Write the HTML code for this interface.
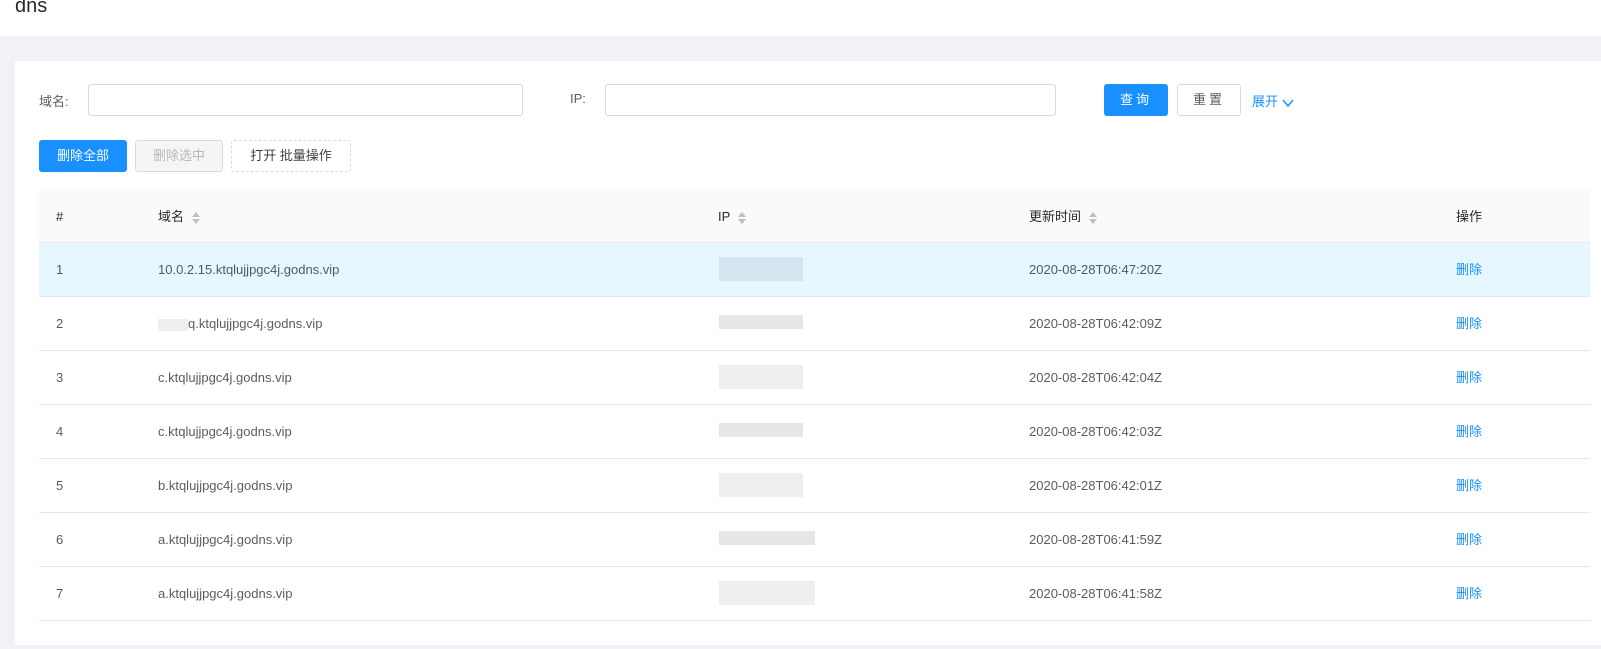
<!DOCTYPE html>
<html><head><meta charset="utf-8"><style>
*{box-sizing:border-box;margin:0;padding:0}
body{width:1601px;height:649px;overflow:hidden;background:#f0f2f5;font-family:"Liberation Sans","Noto Sans CJK SC",sans-serif;font-size:13px;color:rgba(0,0,0,.65);position:relative}
.abs{position:absolute}
.hdr{left:0;top:0;width:1601px;height:36px;background:#fff}
.title{left:15px;top:-5px;font-size:20px;color:rgba(0,0,0,.85)}
.card{left:15px;top:61px;width:1586px;height:584px;background:#fff}
.inp{border:1px solid #d9d9d9;border-radius:3px;height:32px;background:#fff}
.btn{height:32px;border:1px solid #d9d9d9;border-radius:3px;text-align:center;line-height:30px;font-size:13px;background:#fff;color:rgba(0,0,0,.65)}
.pri{background:#1890ff;border-color:#1890ff;color:#fff}
.dis{background:#f5f5f5;color:rgba(0,0,0,.25)}
.dash{border-style:dashed}
.th{left:39px;top:190px;width:1551px;height:53px;background:#fafafa;border-bottom:1px solid #e8e8e8}
.row{left:39px;width:1551px;height:54px;border-bottom:1px solid #e8e8e8}
.cell{position:absolute;top:0;line-height:53px;white-space:nowrap}
.th .cell{color:rgba(0,0,0,.85)}
.sort{display:inline-block;vertical-align:middle;margin-left:8px;width:8px;height:12px;position:relative}
.sort:before,.sort:after{content:"";position:absolute;left:0;border-left:4px solid transparent;border-right:4px solid transparent}
.sort:before{top:0;border-bottom:5px solid #bfbfbf}
.sort:after{bottom:0;border-top:5px solid #bfbfbf}
.blk{position:absolute;left:680px;top:18px;width:84px;height:14px;background:#e6e6e8}
a{color:#1890ff;text-decoration:none}
</style></head><body>
<div class="abs hdr"></div>
<div class="abs title">dns</div>
<div class="abs card"></div>
<div class="abs" style="left:39px;top:91px">域名:</div>
<div class="abs inp" style="left:88px;top:84px;width:435px"></div>
<div class="abs" style="left:570px;top:91px">IP:</div>
<div class="abs inp" style="left:605px;top:84px;width:451px"></div>
<div class="abs btn pri" style="left:1104px;top:84px;width:64px;letter-spacing:3px">查询</div>
<div class="abs btn" style="left:1177px;top:84px;width:64px;letter-spacing:3px">重置</div>
<div class="abs" style="left:1252px;top:91px;color:#1890ff">展开 <svg width="12" height="10" viewBox="0 0 12 10" style="vertical-align:middle"><path d="M1 2l5 6 5-6" fill="none" stroke="#1890ff" stroke-width="1.4"/></svg></div>
<div class="abs btn pri" style="left:39px;top:140px;width:88px">删除全部</div>
<div class="abs btn dis" style="left:135px;top:140px;width:88px">删除选中</div>
<div class="abs btn dash" style="left:231px;top:140px;width:120px;color:rgba(0,0,0,.75)">打开 批量操作</div>
<div class="abs th">
<div class="cell" style="left:17px">#</div>
<div class="cell" style="left:119px">域名<span class="sort"></span></div>
<div class="cell" style="left:679px">IP<span class="sort"></span></div>
<div class="cell" style="left:990px">更新时间<span class="sort"></span></div>
<div class="cell" style="left:1417px">操作</div>
</div>
<div class="abs row" style="top:243px;background:#e6f7ff"><div class="cell" style="left:17px">1</div><div class="cell" style="left:119px">10.0.2.15.ktqlujjpgc4j.godns.vip</div><div class="blk" style="background:#d3e6ef;height:24px;top:14px"></div><div class="cell" style="left:990px">2020-08-28T06:47:20Z</div><div class="cell" style="left:1417px"><a>删除</a></div></div>
<div class="abs row" style="top:297px"><div class="cell" style="left:17px">2</div><div class="cell" style="left:119px"><span style="display:inline-block;width:30px;height:12px;background:#eee;vertical-align:middle"></span>q.ktqlujjpgc4j.godns.vip</div><div class="blk"></div><div class="cell" style="left:990px">2020-08-28T06:42:09Z</div><div class="cell" style="left:1417px"><a>删除</a></div></div>
<div class="abs row" style="top:351px"><div class="cell" style="left:17px">3</div><div class="cell" style="left:119px">c.ktqlujjpgc4j.godns.vip</div><div class="blk" style="background:#efefef;height:24px;top:14px"></div><div class="cell" style="left:990px">2020-08-28T06:42:04Z</div><div class="cell" style="left:1417px"><a>删除</a></div></div>
<div class="abs row" style="top:405px"><div class="cell" style="left:17px">4</div><div class="cell" style="left:119px">c.ktqlujjpgc4j.godns.vip</div><div class="blk"></div><div class="cell" style="left:990px">2020-08-28T06:42:03Z</div><div class="cell" style="left:1417px"><a>删除</a></div></div>
<div class="abs row" style="top:459px"><div class="cell" style="left:17px">5</div><div class="cell" style="left:119px">b.ktqlujjpgc4j.godns.vip</div><div class="blk" style="background:#efefef;height:24px;top:14px"></div><div class="cell" style="left:990px">2020-08-28T06:42:01Z</div><div class="cell" style="left:1417px"><a>删除</a></div></div>
<div class="abs row" style="top:513px"><div class="cell" style="left:17px">6</div><div class="cell" style="left:119px">a.ktqlujjpgc4j.godns.vip</div><div class="blk" style="width:96px"></div><div class="cell" style="left:990px">2020-08-28T06:41:59Z</div><div class="cell" style="left:1417px"><a>删除</a></div></div>
<div class="abs row" style="top:567px"><div class="cell" style="left:17px">7</div><div class="cell" style="left:119px">a.ktqlujjpgc4j.godns.vip</div><div class="blk" style="background:#efefef;height:24px;top:14px;width:96px"></div><div class="cell" style="left:990px">2020-08-28T06:41:58Z</div><div class="cell" style="left:1417px"><a>删除</a></div></div>
</body></html>
